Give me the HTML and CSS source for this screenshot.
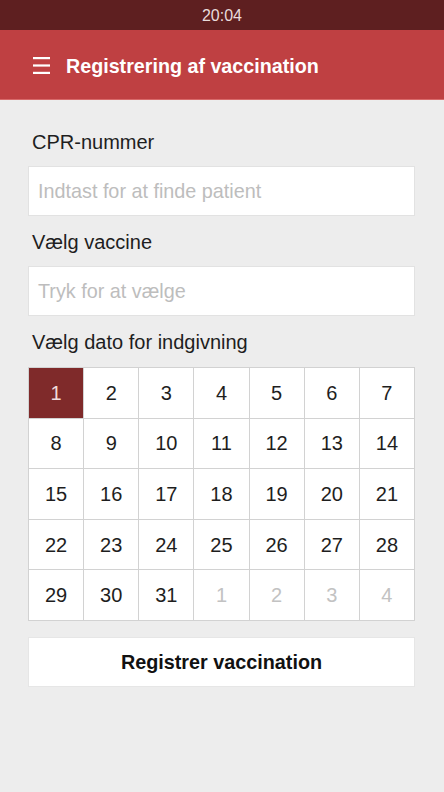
FILE: index.html
```html
<!DOCTYPE html>
<html lang="da">
<head>
<meta charset="utf-8">
<title>Registrering af vaccination</title>
<link rel="stylesheet" href="styles.css">
</head>
<body>
<div class="status-bar">20:04</div>
<header class="app-bar">
  <svg class="menu-icon" width="17" height="17" viewBox="0 0 17 17" aria-hidden="true">
    <rect x="0" y="0" width="17" height="2.2" fill="#fff"/>
    <rect x="0" y="7.4" width="17" height="2.2" fill="#fff"/>
    <rect x="0" y="14.8" width="17" height="2.2" fill="#fff"/>
  </svg>
  <h1 class="app-title">Registrering af vaccination</h1>
</header>
<main class="content">
  <label class="field-label">CPR-nummer</label>
  <div class="input-box"><span class="placeholder">Indtast for at finde patient</span></div>
  <label class="field-label">Vælg vaccine</label>
  <div class="input-box"><span class="placeholder">Tryk for at vælge</span></div>
  <label class="field-label">Vælg dato for indgivning</label>
  <div class="calendar">
    <div class="day selected">1</div>
    <div class="day">2</div>
    <div class="day">3</div>
    <div class="day">4</div>
    <div class="day">5</div>
    <div class="day">6</div>
    <div class="day">7</div>
    <div class="day">8</div>
    <div class="day">9</div>
    <div class="day">10</div>
    <div class="day">11</div>
    <div class="day">12</div>
    <div class="day">13</div>
    <div class="day">14</div>
    <div class="day">15</div>
    <div class="day">16</div>
    <div class="day">17</div>
    <div class="day">18</div>
    <div class="day">19</div>
    <div class="day">20</div>
    <div class="day">21</div>
    <div class="day">22</div>
    <div class="day">23</div>
    <div class="day">24</div>
    <div class="day">25</div>
    <div class="day">26</div>
    <div class="day">27</div>
    <div class="day">28</div>
    <div class="day">29</div>
    <div class="day">30</div>
    <div class="day">31</div>
    <div class="day muted">1</div>
    <div class="day muted">2</div>
    <div class="day muted">3</div>
    <div class="day muted">4</div>
  </div>
  <button class="submit-btn" type="button">Registrer vaccination</button>
</main>
</body>
</html>
```
FILE: styles.css
```css
* { box-sizing: border-box; }
html, body {
  margin: 0;
  padding: 0;
  background: #ededed;
  font-family: "Liberation Sans", Arial, sans-serif;
  color: #222;
}
body { min-height: 792px; }

.status-bar {
  height: 30px;
  background: #5e1f20;
  color: #e9dcdc;
  font-size: 16px;
  line-height: 31px;
  text-align: center;
}

.app-bar {
  height: 70px;
  background: #bf4042;
  border-bottom: 1px solid #d86a6a;
  display: flex;
  align-items: center;
  padding-left: 33px;
  padding-top: 3px;
  gap: 16px;
}
.menu-icon { flex: none; margin-top: -1px; }
.app-title {
  margin: 0;
  color: #fff;
  font-size: 19.7px;
  font-weight: bold;
}

.content {
  padding: 16px 29px 0 28px;
  display: flex;
  flex-direction: column;
}

.field-label {
  display: block;
  font-size: 20px;
  line-height: 24px;
  padding: 14px 4px 12px;
  color: #1e1e1e;
}

.input-box {
  height: 50px;
  background: #fff;
  border: 1px solid #e2e2e2;
  display: flex;
  align-items: center;
  padding-left: 9px;
}
.placeholder {
  font-size: 19.8px;
  color: #bdbdbd;
}

.calendar {
  display: grid;
  grid-template-columns: repeat(7, 1fr);
  grid-template-rows: repeat(5, 49.6px);
  gap: 1px;
  padding: 1px;
  background: #d2d2d2;
  margin-top: 1px;
}
.day {
  background: #fff;
  display: flex;
  align-items: center;
  justify-content: center;
  font-size: 20px;
  color: #1e1e1e;
  padding-top: 1px;
}
.day.selected {
  background: #7f2a2a;
  color: #f0dcdc;
}
.day.muted { color: #c2c2c2; }

.submit-btn {
  margin-top: 16px;
  height: 50px;
  background: #fff;
  border: 1px solid #e6e6e6;
  font-family: "Liberation Sans", Arial, sans-serif;
  font-size: 19.8px;
  font-weight: bold;
  color: #111;
  padding: 2px 0 0;
}
```
